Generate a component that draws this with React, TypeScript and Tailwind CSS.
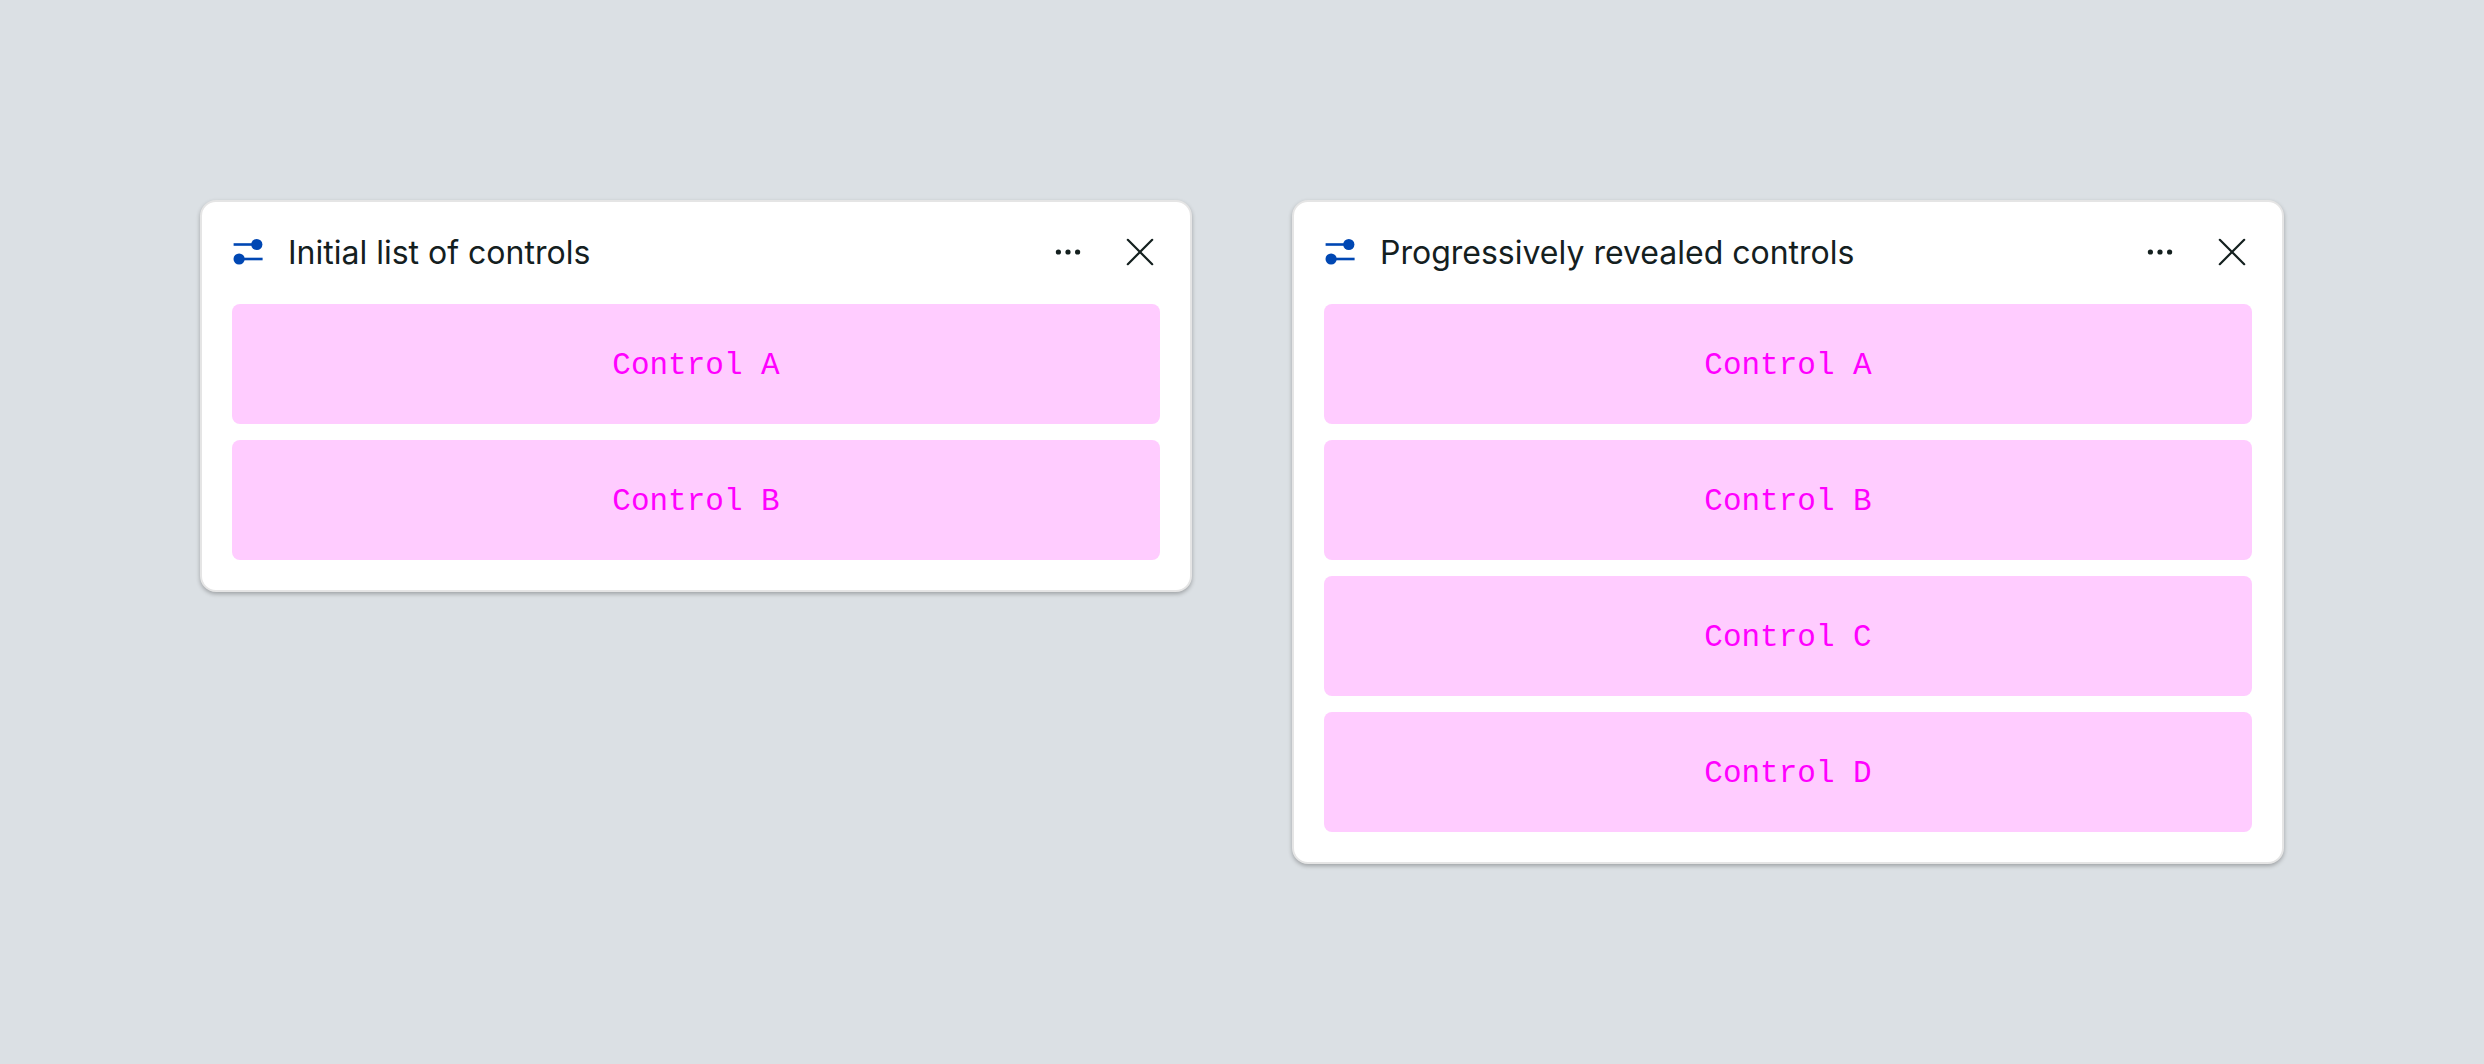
function SlidersIcon() {
  return (
    <svg aria-hidden="true" viewBox="0 0 32 32" className="size-8 shrink-0 text-[#0047b3]" fill="currentColor">
      <rect x="1.6" y="7.2" width="22" height="2.6" />
      <circle cx="24.8" cy="8.5" r="5.6" />
      <rect x="8.6" y="21.7" width="22" height="2.6" />
      <circle cx="7.1" cy="23" r="5.6" />
    </svg>
  );
}

function MoreIcon() {
  return (
    <svg aria-hidden="true" viewBox="0 0 32 32" className="size-8" fill="currentColor">
      <circle cx="6.4" cy="16" r="2.6" />
      <circle cx="16" cy="16" r="2.6" />
      <circle cx="25.6" cy="16" r="2.6" />
    </svg>
  );
}

function CloseIcon() {
  return (
    <svg aria-hidden="true" viewBox="0 0 32 32" className="size-8" fill="none" stroke="currentColor" strokeWidth="2.2" strokeLinecap="round">
      <path d="M3.8 3.8 28.2 28.2M28.2 3.8 3.8 28.2" />
    </svg>
  );
}

function Panel({ title, controls }: { title: string; controls: string[] }) {
  return (
    <section className="min-w-0 flex-1 rounded-2xl border-2 border-[#e5e5e5] bg-white px-[30px] pb-[30px] shadow-[0_2px_4px_rgba(0,0,0,0.28)]">
      <header className="mb-0.5 flex h-[100px] items-center text-[#14201f]">
        <SlidersIcon />
        <h2 className="ml-6 flex-1 pt-0.5 font-['Inter','Liberation_Sans',sans-serif] text-[32px] leading-10">{title}</h2>
        <button type="button" aria-label="More options" className="mr-10">
          <MoreIcon />
        </button>
        <button type="button" aria-label="Close" className="mr-1">
          <CloseIcon />
        </button>
      </header>
      <ul className="flex flex-col gap-4">
        {controls.map((control) => (
          <li
            key={control}
            className="flex h-[120px] items-center justify-center rounded-lg bg-[#ffccff] pt-1 font-['Liberation_Mono',monospace] text-[31px] leading-10 text-[#ff00ff]"
          >
            {control}
          </li>
        ))}
      </ul>
    </section>
  );
}

export default function App() {
  return (
    <main className="flex min-h-screen items-start gap-[100px] bg-[#dbe0e4] p-[200px]">
      <Panel title="Initial list of controls" controls={["Control A", "Control B"]} />
      <Panel
        title="Progressively revealed controls"
        controls={["Control A", "Control B", "Control C", "Control D"]}
      />
    </main>
  );
}
